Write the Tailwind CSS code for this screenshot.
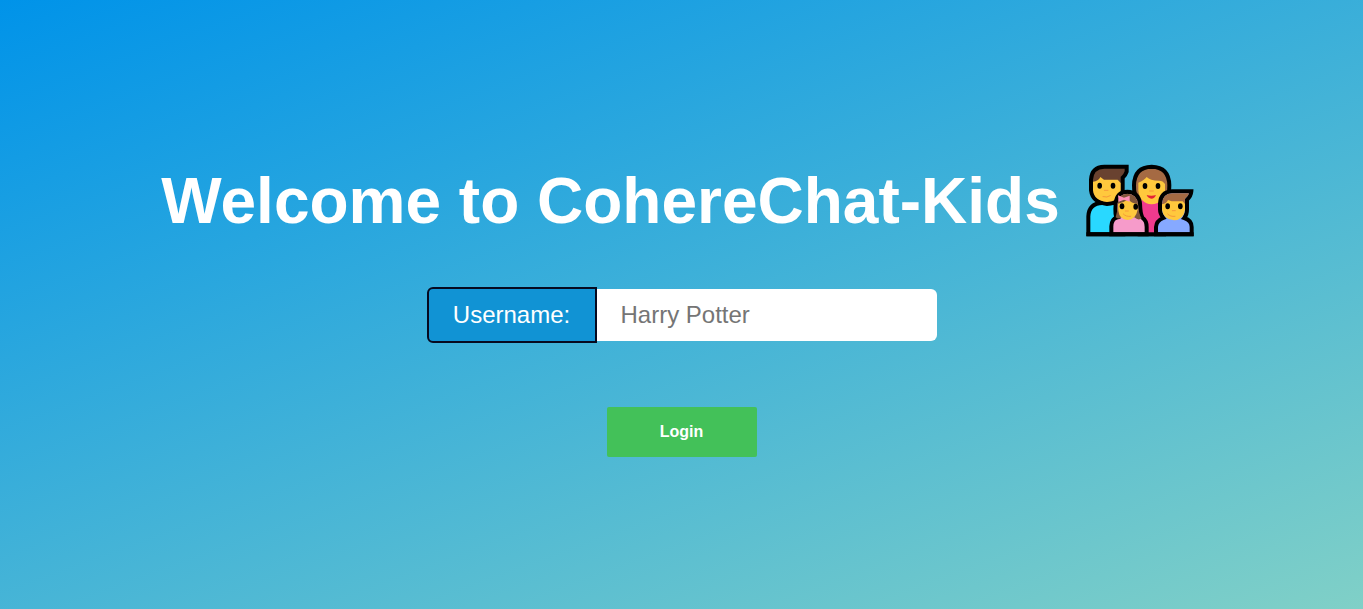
<!DOCTYPE html>
<html lang="en">
<head>
<meta charset="utf-8">
<meta name="viewport" content="width=device-width, initial-scale=1">
<title>CohereChat-Kids</title>
<script src="https://cdn.jsdelivr.net/npm/@tailwindcss/browser@4"></script>
</head>
<body class="min-h-screen bg-[linear-gradient(160deg,#0093E9_0%,#80D0C7_100%)] font-['Liberation_Sans',Arial,sans-serif]">
<main class="flex min-h-screen flex-col items-center justify-center">
  <h1 class="flex items-center justify-center gap-6 pr-1.5 text-[64px] leading-[96px] font-bold text-white">
    <span>Welcome to CohereChat-Kids</span>
    <svg class="h-[75px] w-28 shrink-0" viewBox="27 24 336 225" role="img" aria-label="Family">
      <!-- father -->
      <path d="M40 238V184Q42 145 82 144H145V238Z" fill="#29d8ff" stroke="#000" stroke-width="12"/>
      <path d="M48 106V74Q50 36 88 35H155V50Q152 60 143 68V106Q139 145 96 147Q53 143 48 106Z" fill="#694230" stroke="#000" stroke-width="12"/>
      <path d="M54 80Q70 79 76 66L87 74H128L137 84V106Q133 139 96 141Q58 138 54 106Z" fill="#ffc83d"/>
      <!-- mother -->
      <path d="M194 238V142Q176 126 177 91Q178 36 230 35Q282 36 283 91Q284 126 267 142V238Z" fill="#a56a43" stroke="#000" stroke-width="12"/>
      <path d="M200 134H261V238H200Z" fill="#f03a8d"/>
      <path d="M190 83Q208 76 215 66Q225 77 252 77Q264 77 270 87V107Q265 146 230 148Q195 145 190 107Z" fill="#ffc83d"/>
      <!-- daughter -->
      <path d="M109 238V214Q110 192 125 188Q119 183 122 145Q125 111 157 110Q190 111 195 146Q196 176 202 188Q215 197 215 216V238Z" fill="#f69bca" stroke="#000" stroke-width="12"/>
      <path d="M128 145Q130 117 157 116Q185 117 189 147Q190 175 200 190Q190 198 178 187H139Q132 194 122 187Q128 170 128 145Z" fill="#81563b"/>
      <path d="M129 146Q147 143 160 133Q168 145 188 147V164Q182 194 158 195Q133 193 130 167Z" fill="#ffc83d"/>
      <path d="M129 121L147 128L164 122V140L147 134L131 140Z" fill="#ff8fb9"/>
      <!-- son -->
      <path d="M243 238V216Q244 197 265 189Q255 177 255 163V146Q257 111 291 109H349Q348 123 336 134V163Q336 179 328 189Q350 196 350 216V238Z" fill="#86a9ff" stroke="#000" stroke-width="12"/>
      <path d="M261 165V146Q263 116 291 115H342Q340 124 330 131V165Z" fill="#a56a43"/>
      <path d="M261 148Q274 146 279 135L290 139H323L330 147V164Q326 194 297 196Q265 193 261 164Z" fill="#ffc83d"/>
      <g fill="#000">
        <ellipse cx="74" cy="92" rx="7" ry="9"/><ellipse cx="114" cy="92" rx="7" ry="9"/>
        <ellipse cx="210" cy="93" rx="7" ry="9"/><ellipse cx="249" cy="93" rx="7" ry="9"/>
        <ellipse cx="141" cy="154" rx="7" ry="9"/><ellipse cx="182" cy="155" rx="7" ry="9"/>
        <ellipse cx="278" cy="154" rx="7" ry="9"/><ellipse cx="316" cy="154" rx="7" ry="9"/>
      </g>
      <path d="M88 106H99M84 125Q96 129 106 122M224 108H235M151 168H160M145 177Q153 186 167 184M292 167H301M278 177Q286 186 300 184" fill="none" stroke="#f6993a" stroke-width="3" stroke-linecap="round"/>
      <path d="M215 120Q229 124 243 120Q239 131 229 131Q219 130 215 120Z" fill="#e52235"/>
      <path d="M34 238H356" stroke="#000" stroke-width="12"/>
    </svg>
  </h1>
  <form class="flex flex-col items-center pt-9.5" onsubmit="return false">
    <div class="flex items-center text-2xl">
      <label for="username" class="flex h-14 w-[170px] items-center justify-center rounded-l-md border-2 border-[#060a20] bg-[#1193d4] text-white">Username:</label>
      <input id="username" type="text" placeholder="Harry Potter" class="h-[52px] w-[340px] rounded-r-md bg-white px-6 text-[#222] placeholder:text-[#757575] focus:outline-none">
    </div>
    <button type="submit" class="mt-16 h-[50px] w-[150px] rounded-xs bg-[#43c159] text-base font-bold text-white">Login</button>
  </form>
</main>
</body>
</html>
